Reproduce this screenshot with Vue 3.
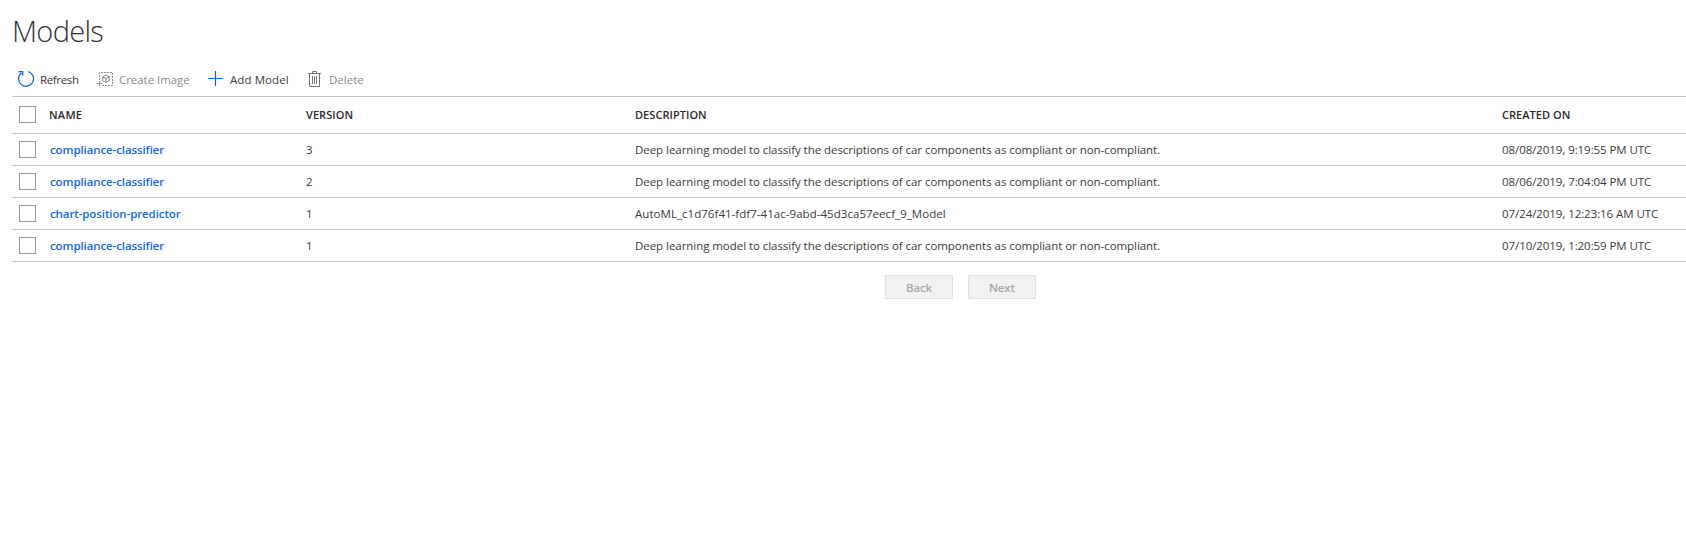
<script setup>
const rows = [
  { name: 'compliance-classifier', version: '3', description: 'Deep learning model to classify the descriptions of car components as compliant or non-compliant.', created: '08/08/2019, 9:19:55 PM UTC' },
  { name: 'compliance-classifier', version: '2', description: 'Deep learning model to classify the descriptions of car components as compliant or non-compliant.', created: '08/06/2019, 7:04:04 PM UTC' },
  { name: 'chart-position-predictor', version: '1', description: 'AutoML_c1d76f41-fdf7-41ac-9abd-45d3ca57eecf_9_Model', created: '07/24/2019, 12:23:16 AM UTC' },
  { name: 'compliance-classifier', version: '1', description: 'Deep learning model to classify the descriptions of car components as compliant or non-compliant.', created: '07/10/2019, 1:20:59 PM UTC' },
]
</script>

<template>
  <main class="page">
    <h1 class="title">Models</h1>
    <nav class="toolbar">
      <button class="tool refresh">
        <svg width="18" height="18" viewBox="0 0 18 18" fill="none" stroke="#0f62d8" stroke-width="1.25">
          <path d="M11 1.5A7.5 7.5 0 1 1 4.6 2.7" />
          <path d="M1.5 1.5H5.7V5.5" />
        </svg>
        <span>Refresh</span>
      </button>
      <button class="tool create off">
        <svg width="18" height="18" viewBox="0 0 18 18" fill="none" stroke="#8a8a8a">
          <path d="M2.5 10V2.5H15.5V15.5H5" stroke-dasharray="2 1" />
          <path d="M0 13.5H5M2.5 11V16" />
          <path d="M9 5.2L12.3 6.8V10.7L9 12.4L5.7 10.7V6.8ZM5.7 6.8L9 8.5L12.3 6.8M9 8.5V12.4" />
        </svg>
        <span>Create Image</span>
      </button>
      <button class="tool add">
        <svg width="16" height="16" viewBox="0 0 16 16" stroke="#0f62d8" stroke-width="1.2">
          <path d="M0 7.5H15M7.5 0V15" />
        </svg>
        <span>Add Model</span>
      </button>
      <button class="tool delete off">
        <svg width="14" height="17" viewBox="0 0 14 17" fill="none" stroke="#777">
          <path d="M0 2.5H13M4.5 2.5V.5H8.5V2.5M1.5 2.5V15.5H11.5V2.5M4.5 5V13M6.5 5V13M8.5 5V13" />
        </svg>
        <span>Delete</span>
      </button>
    </nav>
    <section class="table">
      <div class="row head">
        <i class="box"></i>
        <span class="name-head">NAME</span>
        <span>VERSION</span>
        <span>DESCRIPTION</span>
        <span>CREATED ON</span>
      </div>
      <div v-for="(r, i) in rows" :key="i" class="row data">
        <i class="box"></i>
        <a class="link">{{ r.name }}</a>
        <span>{{ r.version }}</span>
        <span :class="i === 2 ? 'ident' : 'desc'">{{ r.description }}</span>
        <span class="date">{{ r.created }}</span>
      </div>
    </section>
    <footer class="pager">
      <button class="page-btn" disabled>Back</button>
      <button class="page-btn" disabled>Next</button>
    </footer>
  </main>
</template>

<style>
body { background: #fff; }
</style>

<style scoped>
.page {
  box-sizing: border-box;
  height: 548px;
  padding-left: 12px;
  overflow: hidden;
  font: 11.5px/16px "Open Sans", "Noto Sans", sans-serif;
  color: #3a3a3a;
}
.title {
  margin: 0;
  height: 62px;
  padding-top: 11px;
  box-sizing: border-box;
  font-size: 29px;
  line-height: 40px;
  font-weight: 300;
  letter-spacing: -0.7px;
  color: #333;
}
.toolbar {
  display: flex;
  align-items: center;
  height: 34px;
  padding-left: 5px;
}
.tool {
  display: flex;
  align-items: center;
  height: 34px;
  padding: 0;
  border: 0;
  background: none;
  font: inherit;
  color: #3a3a3a;
  white-space: nowrap;
}
.tool span { padding-top: 2px; }
.off { color: #8c8c8c; }
.refresh { width: 80px; gap: 5px; letter-spacing: -0.35px; }
.create { width: 111px; gap: 4px; letter-spacing: -0.05px; }
.add { width: 100px; gap: 6px; letter-spacing: 0.08px; }
.delete { gap: 7px; }
.table { border-top: 1px solid #c4c4c4; }
.row {
  display: grid;
  grid-template-columns: 38px 256px 329px 867px 1fr;
  align-items: center;
  height: 31px;
  border-bottom: 1px solid #c4c4c4;
  white-space: nowrap;
}
.data > :not(.box) { padding-top: 1px; }
.head {
  height: 36px;
  font-size: 11px;
  font-weight: 600;
  letter-spacing: 0.05px;
  color: #2a2a2a;
}
.name-head { margin-left: -1px; letter-spacing: 0.25px; }
.box {
  box-sizing: border-box;
  width: 17px;
  height: 17px;
  margin: 0 0 1px 7px;
  border: 1px solid #999;
}
.link { color: #1569e0; font-weight: 600; letter-spacing: -0.1px; }
.desc { letter-spacing: -0.05px; }
.ident { letter-spacing: 0.04px; }
.date { letter-spacing: -0.07px; }
.pager {
  display: flex;
  gap: 15px;
  padding: 13px 0 0 873px;
}
.page-btn {
  box-sizing: border-box;
  width: 68px;
  height: 24px;
  padding: 1px 0 0;
  border: 1px solid #e1e1e1;
  background: #f1f1f1;
  font: 600 11.5px/16px "Open Sans", "Noto Sans", sans-serif;
  letter-spacing: -0.1px;
  color: #a8a8a8;
}
</style>
